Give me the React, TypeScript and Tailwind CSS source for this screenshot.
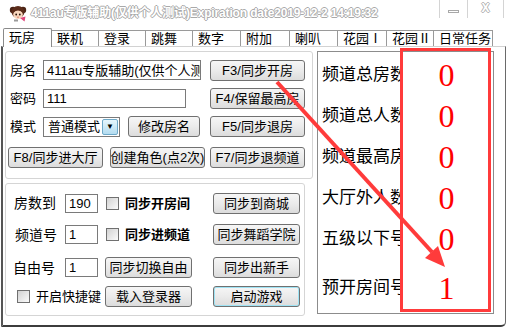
import React from "react";

const tabs: [string, number][] = [
  ["联机", 47],
  ["登录", 47],
  ["跳舞", 47],
  ["数字", 48],
  ["附加", 49],
  ["喇叭", 48],
  ["花园Ⅰ", 49],
  ["花园Ⅱ", 47],
  ["日常任务", 59],
];

const rows: [string, string][] = [
  ["频道总房数", "0"],
  ["频道总人数", "0"],
  ["频道最高房", "0"],
  ["大厅外人数", "0"],
  ["五级以下号", "0"],
];

function GirlIcon() {
  return (
    <svg width="18" height="18" viewBox="0 0 18 18">
      <circle cx="4" cy="6" r="3.2" fill="#4a2416" />
      <circle cx="14" cy="6" r="3.2" fill="#4a2416" />
      <ellipse cx="9" cy="8" rx="6.5" ry="6" fill="#5b2c1a" />
      <ellipse cx="9" cy="10.6" rx="4.8" ry="4.5" fill="#f7d6bd" />
      <path d="M4.4 8.5 Q9 4.5 13.6 8.5 L13.6 7 Q9 2.8 4.4 7Z" fill="#5b2c1a" />
      <circle cx="7.2" cy="10.5" r="0.9" fill="#2a1208" />
      <circle cx="10.8" cy="10.5" r="0.9" fill="#2a1208" />
      <path d="M8.2 13 Q9 13.8 9.8 13" stroke="#c0392b" strokeWidth="0.7" fill="none" />
      <path d="M11 14 L16.5 12.5 L15.5 17.5 Z" fill="#e0457b" />
      <rect x="5" y="15.5" width="4" height="2" fill="#9a9a9a" />
    </svg>
  );
}

function Btn({ label, className = "" }: { label: string; className?: string }) {
  return (
    <div
      className={`flex items-center justify-center rounded-[3px] border border-[#707070] bg-linear-to-b from-[#f6f6f6] via-[#ebebeb] to-[#dcdcdc] text-[13px] leading-none whitespace-nowrap ${className}`}>
      {label}
    </div>
  );
}

function Field({ value, className = "" }: { value: string; className?: string }) {
  return (
    <div
      className={`flex items-center overflow-hidden whitespace-nowrap border border-[#7a7a7a] bg-white px-[3px] text-[13px] leading-none ${className}`}>
      {value}
    </div>
  );
}

function Check() {
  return (
    <div className="h-[13px] w-[13px] shrink-0 border border-[#707070] bg-linear-to-br from-[#d2d2d2] to-[#fbfbfb]" />
  );
}

export default function App() {
  return (
    <div className="relative h-[328px] w-[507px] overflow-hidden bg-white font-['Liberation_Sans','Noto_Sans_CJK_SC',sans-serif] text-black">
      {/* title bar */}
      <div className="flex h-[26px]">
        <div className="ml-[9px] mt-[4px]">
          <GirlIcon />
        </div>
        <div className="ml-[4px] mt-[5px] whitespace-nowrap text-[12px] font-bold leading-[16px] tracking-[-0.15px] text-white [text-shadow:1px_0_0_#a9a9a9,-1px_0_0_#a9a9a9,0_1px_0_#a9a9a9,0_-1px_0_#a9a9a9]">
          411au专版辅助(仅供个人测试)Expiration date2019-12-2 14:19:32
        </div>
        <div className="flex-1" />
        <div className="mr-[3px] flex h-[18px]">
          <div className="flex w-[28px] items-center justify-center border-l border-[#d4d4d4] pt-[4px]">
            <div className="h-[3px] w-[11px] border border-[#a8a8a8] bg-white" />
          </div>
          <div className="flex w-[37px] items-center justify-center border-x border-[#d4d4d4] pb-[3px] text-[12px] font-bold text-white [text-shadow:1px_0_0_#b5b5b5,-1px_0_0_#b5b5b5,0_1px_0_#b5b5b5,0_-1px_0_#b5b5b5]">
            X
          </div>
        </div>
      </div>

      {/* tab strip */}
      <div className="flex h-[20px] items-end pl-[3px] text-[13px] leading-none">
        <div className="relative z-10 -mb-px flex h-[19px] w-[49px] items-center rounded-t-[2px] border-x border-t border-[#8a8a8a] bg-white pb-[1px] pl-[5px]">
          玩房
        </div>
        {tabs.map(([t, w]) => (
          <div
            key={t}
            style={{ width: w }}
            className="flex h-[16px] items-center border-r border-t border-[#9a9a9a] bg-white pl-[5px]">
            {t}
          </div>
        ))}
      </div>

      {/* tab page */}
      <div className="ml-[1px] flex h-[281px] w-[505px] rounded-br-[5px] border-b-2 border-l-2 border-r border-t border-b-[#3c3c3c] border-l-[#555] border-r-[#6a6a6a] border-t-[#d2d2d2] pt-[4px]">
        <div className="ml-[2px] flex flex-col">
          {/* group 1 */}
          <div className="flex h-[128px] w-[308px] flex-col rounded-[3px] border border-[#d5d5d5] text-[13px] leading-none">
            <div className="mt-[7px] flex h-[22px] items-center pl-[4px]">
              <span className="w-[33px]">房名</span>
              <Field value="411au专版辅助(仅供个人测试)" className="h-[20px] w-[158px]" />
              <Btn label="F3/同步开房" className="ml-[9px] h-[21px] w-[95px]" />
            </div>
            <div className="mt-[7px] flex h-[21px] items-center pl-[4px]">
              <span className="w-[33px]">密码</span>
              <Field value="111" className="h-[19px] w-[143px]" />
              <Btn label="F4/保留最高房" className="ml-[24px] h-[21px] w-[95px]" />
            </div>
            <div className="mt-[6px] flex h-[23px] items-center pl-[4px]">
              <span className="w-[33px]">模式</span>
              <div className="flex h-[20px] w-[77px] items-center justify-between border border-[#7a7a7a] bg-white pl-[4px] pr-[1px]">
                <span>普通模式</span>
                <div className="flex h-[16px] w-[16px] items-center justify-center rounded-[2px] border border-[#6ea9c9] bg-linear-to-b from-[#e6f6fd] to-[#b3dcf0] text-[8px]">
                  ▼
                </div>
              </div>
              <Btn label="修改房名" className="ml-[8px] h-[21px] w-[72px]" />
              <Btn label="F5/同步退房" className="ml-[10px] h-[21px] w-[95px]" />
            </div>
            <div className="mt-[9px] flex h-[21px] items-center pl-[2px]">
              <Btn label="F8/同步进大厅" className="h-[21px] w-[95px]" />
              <Btn label="创建角色(点2次)" className="ml-[7px] h-[21px] w-[95px]" />
              <Btn label="F7/同步退频道" className="ml-[5px] h-[21px] w-[95px]" />
            </div>
          </div>

          {/* group 2 */}
          <div className="mt-[4px] flex h-[133px] w-[300px] flex-col rounded-[3px] border border-[#d5d5d5] text-[13px] leading-none">
            <div className="mt-[9px] flex h-[20px] items-center pr-[4px]">
              <span className="ml-[8px] w-[51px] text-[14px]">房数到</span>
              <Field value="190" className="h-[19px] w-[33px] text-[12px]" />
              <div className="ml-[8px]">
                <Check />
              </div>
              <span className="ml-[6px] font-bold">同步开房间</span>
              <Btn label="同步到商城" className="ml-auto h-[21px] w-[87px]" />
            </div>
            <div className="mt-[11px] flex h-[21px] items-center pr-[4px]">
              <span className="ml-[9px] w-[50px] text-[14px]">频道号</span>
              <Field value="1" className="h-[19px] w-[33px] text-[12px]" />
              <div className="ml-[8px]">
                <Check />
              </div>
              <span className="ml-[6px] font-bold">同步进频道</span>
              <Btn label="同步舞蹈学院" className="ml-auto h-[21px] w-[87px]" />
            </div>
            <div className="mt-[12px] flex h-[21px] items-center pr-[4px]">
              <span className="ml-[7px] w-[52px] text-[14px]">自由号</span>
              <Field value="1" className="h-[19px] w-[33px] text-[12px]" />
              <Btn label="同步切换自由" className="ml-[7px] h-[21px] w-[87px]" />
              <Btn label="同步出新手" className="ml-auto h-[21px] w-[87px]" />
            </div>
            <div className="mt-[8px] flex h-[21px] items-center pr-[4px]">
              <div className="ml-[11px] flex w-[88px] items-center">
                <Check />
                <span className="ml-[6px]">开启快捷键</span>
              </div>
              <Btn label="载入登录器" className="h-[21px] w-[87px]" />
              <Btn
                label="启动游戏"
                className="ml-auto h-[21px] w-[87px] border-[#3c8db4] shadow-[inset_0_0_0_1px_#9fe3f4]"
              />
            </div>
          </div>
        </div>

        {/* right panel */}
        <div className="ml-[4px] flex h-[263px] w-[177px] flex-col border border-[#8c8c8c] pt-[2px]">
          {rows.map(([l, n]) => (
            <div key={l} className="flex h-[41px] items-center">
              <span className="ml-[4px] w-[81px] overflow-hidden whitespace-nowrap text-[17px] leading-none">{l}</span>
              <span className="w-[87px] text-center font-['Liberation_Serif',serif] text-[32px] leading-none text-[#ff0000]">
                {n}
              </span>
            </div>
          ))}
          <div className="mt-[8px] flex h-[41px] items-center">
            <span className="ml-[4px] w-[81px] overflow-hidden whitespace-nowrap text-[17px] leading-none">预开房间号</span>
            <span className="w-[87px] text-center font-['Liberation_Serif',serif] text-[32px] leading-none text-[#ff0000]">
              1
            </span>
          </div>
        </div>
      </div>

      {/* red annotation */}
      <svg className="pointer-events-none absolute inset-0" width="507" height="328">
        <rect x="401.5" y="49.5" width="88" height="261" fill="none" stroke="#ff3b3b" strokeWidth="3" />
        <line x1="277" y1="82" x2="432" y2="252" stroke="#ff3b3b" strokeWidth="4" />
        <polygon points="445,267 425,258 438,246" fill="#ff3b3b" />
      </svg>
    </div>
  );
}
